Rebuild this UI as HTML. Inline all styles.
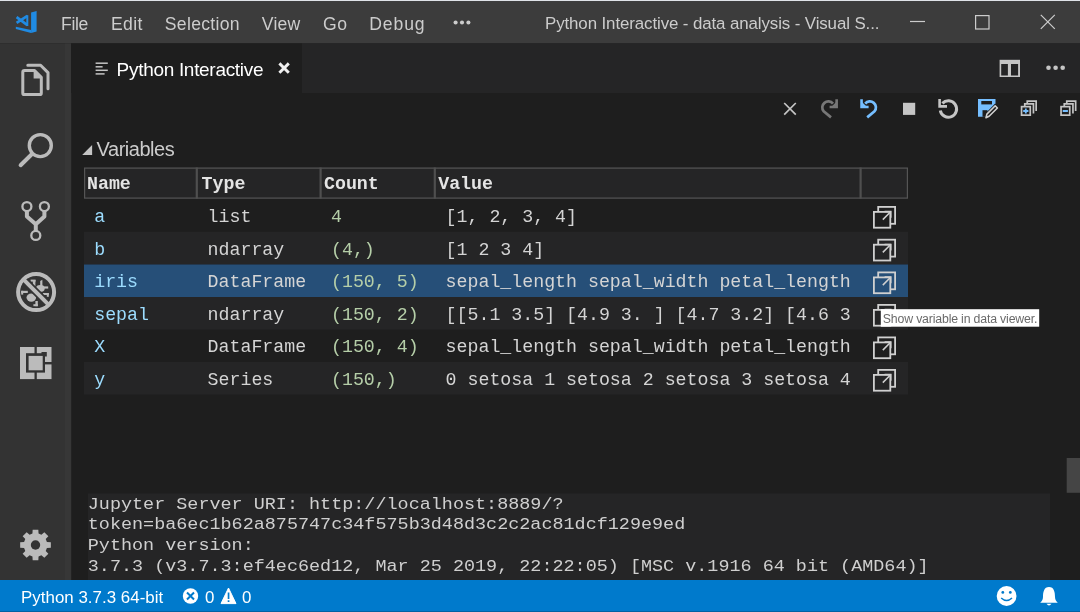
<!DOCTYPE html>
<html><head><meta charset="utf-8">
<style>
html,body{margin:0;padding:0;width:1080px;height:612px;overflow:hidden;background:#1e1e1e;}
svg{display:block;} text{-webkit-font-smoothing:antialiased;}
</style></head>
<body>
<svg style="will-change:transform" width="1080" height="612" viewBox="0 0 1080 612">
<rect x="0" y="0" width="1080" height="612" fill="#1e1e1e"/>
<rect x="0" y="0" width="1080" height="1.2" fill="#dfe3e8"/>
<rect x="0" y="1.2" width="1080" height="42.2" fill="#3c3c3c"/>
<rect x="0" y="43.4" width="65" height="537.6" fill="#333333"/>
<rect x="65" y="43.4" width="6.2" height="536.6" fill="#373737"/>
<rect x="71" y="43.4" width="1009" height="49.6" fill="#252526"/>
<rect x="71" y="43.4" width="231" height="49.6" fill="#1e1e1e"/>
<rect x="0" y="580" width="1080" height="31" fill="#007acc"/>
<rect x="0" y="611" width="1080" height="1" fill="#0062a3"/>
<g fill="#208be3"><polygon points="31.1,12.6 36.6,11 36.6,31.6 31.1,32.9"/><polygon points="15.8,26.7 31.1,29.9 31.1,32.9 15.8,29"/></g>
<path d="M16.6,17.2 L27.4,25.2 M16.6,22.9 L27.4,15.9" stroke="#208be3" stroke-width="2.7" fill="none"/>
<path d="M27.3,15.2 V26" stroke="#208be3" stroke-width="2" fill="none"/>
<circle cx="455.6" cy="22.5" r="2.05" fill="#cccccc"/>
<circle cx="462.0" cy="22.5" r="2.05" fill="#cccccc"/>
<circle cx="468.4" cy="22.5" r="2.05" fill="#cccccc"/>
<line x1="910" y1="21.5" x2="925" y2="21.5" stroke="#cccccc" stroke-width="1.2"/>
<rect x="975.6" y="15.6" width="13.4" height="13.4" fill="none" stroke="#cccccc" stroke-width="1.2"/>
<path d="M1040.8,14.8 L1054.8,28.8 M1054.8,14.8 L1040.8,28.8" stroke="#cccccc" stroke-width="1.2"/>
<path d="M27.8,65.2 H40.6 L48,72.6 V88.8" fill="none" stroke="#bbbbbb" stroke-width="3" stroke-linejoin="round" stroke-linecap="round"/>
<path d="M24.6,70.6 H34.6 L41.3,77.3 V92.9 Q41.3,94.6 39.6,94.6 H24.5 Q22.8,94.6 22.8,92.9 V72.3 Q22.8,70.6 24.6,70.6 Z" fill="none" stroke="#bbbbbb" stroke-width="3" stroke-linejoin="round"/>
<polygon points="33.6,70.6 33.6,78.6 41.5,78.6" fill="#bbbbbb"/>
<circle cx="40.3" cy="145.6" r="11" fill="none" stroke="#bbbbbb" stroke-width="3.4"/>
<line x1="32" y1="154" x2="20.6" y2="165.2" stroke="#bbbbbb" stroke-width="4" stroke-linecap="round"/>
<circle cx="26.9" cy="206.6" r="4.5" fill="none" stroke="#bbbbbb" stroke-width="2.3"/>
<circle cx="44.4" cy="206.6" r="4.5" fill="none" stroke="#bbbbbb" stroke-width="2.3"/>
<circle cx="35.8" cy="235.4" r="4.5" fill="none" stroke="#bbbbbb" stroke-width="2.3"/>
<path d="M26.9,211 V216.5 L35.8,224.2 L44.4,216.5 V211 M35.8,223 V231" fill="none" stroke="#bbbbbb" stroke-width="4" stroke-linejoin="round"/>
<circle cx="36.1" cy="292.1" r="18" fill="none" stroke="#bbbbbb" stroke-width="4"/>
<g fill="#bbbbbb"><ellipse cx="31.3" cy="297.6" rx="4.8" ry="4.2"/><ellipse cx="40.3" cy="288.4" rx="4.4" ry="3.4"/><rect x="32.8" y="280" width="2.6" height="6.5"/><rect x="30.6" y="279.6" width="5" height="2"/><polygon points="40.2,286 40.2,281 42.4,279.8 42.4,286"/><rect x="43.6" y="286.4" width="4.6" height="2.2"/><rect x="21.2" y="290.8" width="6.6" height="2.2"/><rect x="21.2" y="290.8" width="2" height="3.8"/><rect x="35.4" y="301" width="2.4" height="5.2"/><rect x="33.4" y="304.2" width="4.4" height="2"/><rect x="42.8" y="293" width="6" height="2"/><rect x="46.8" y="293" width="2" height="3.8"/></g>
<line x1="25.1" y1="281.1" x2="47.1" y2="303.1" stroke="#333333" stroke-width="7.5"/>
<line x1="23.4" y1="279.4" x2="48.8" y2="304.8" stroke="#bbbbbb" stroke-width="4"/>
<rect x="20" y="347" width="31.5" height="32.1" fill="#bbbbbb"/>
<rect x="26" y="353.2" width="19" height="19.4" fill="#333333"/>
<rect x="41.5" y="352" width="5.3" height="4.5" fill="#333333"/>
<rect x="28.6" y="355.9" width="14.1" height="14.4" fill="#bbbbbb"/>
<rect x="34.5" y="346" width="2.3" height="8" fill="#333333"/>
<rect x="34.5" y="372" width="2.3" height="8" fill="#333333"/>
<rect x="44" y="362" width="8.5" height="2.4" fill="#333333"/>
<polygon points="46.90,541.95 50.84,542.16 50.84,547.84 46.90,548.05 45.72,550.90 48.36,553.84 44.34,557.86 41.40,555.22 38.55,556.40 38.34,560.34 32.66,560.34 32.45,556.40 29.60,555.22 26.66,557.86 22.64,553.84 25.28,550.90 24.10,548.05 20.16,547.84 20.16,542.16 24.10,541.95 25.28,539.10 22.64,536.16 26.66,532.14 29.60,534.78 32.45,533.60 32.66,529.66 38.34,529.66 38.55,533.60 41.40,534.78 44.34,532.14 48.36,536.16 45.72,539.10" fill="#bbbbbb"/>
<circle cx="35.5" cy="545.0" r="4.7" fill="#333333"/>
<line x1="95.6" y1="63.2" x2="107.8" y2="63.2" stroke="#c5c5c5" stroke-width="1.5"/>
<line x1="95.6" y1="66.8" x2="102.6" y2="66.8" stroke="#c5c5c5" stroke-width="1.5"/>
<line x1="95.6" y1="70.3" x2="107.8" y2="70.3" stroke="#c5c5c5" stroke-width="1.5"/>
<line x1="95.6" y1="73.9" x2="104.6" y2="73.9" stroke="#c5c5c5" stroke-width="1.5"/>
<path d="M279.4,63.4 L288.8,72.8 M288.8,63.4 L279.4,72.8" stroke="#f0f0f0" stroke-width="2.9"/>
<rect x="999.6" y="59.8" width="20.4" height="17.2" fill="#c5c5c5"/>
<rect x="1001.2" y="64" width="6.7" height="11.5" fill="#252526"/>
<rect x="1011" y="64" width="7.1" height="11.5" fill="#252526"/>
<circle cx="1048.5" cy="67.7" r="2.3" fill="#c5c5c5"/>
<circle cx="1055.6" cy="67.7" r="2.3" fill="#c5c5c5"/>
<circle cx="1062.7" cy="67.7" r="2.3" fill="#c5c5c5"/>
<path d="M784.2,103 L795.8,114.6 M795.8,103 L784.2,114.6" stroke="#c5c5c5" stroke-width="1.7"/>
<path d="M861.55,99.3 V106.95 H868.6" fill="none" stroke="#75beff" stroke-width="2.6"/><polygon points="861.5,101.5 861.5,107 867,107" fill="#75beff"/><path d="M865.2,103.6 A5.9,5.9 0 1 1 874.5,111.4 L867.2,117.4" fill="none" stroke="#75beff" stroke-width="2.7"/>
<g transform="translate(1698.2,0) scale(-1,1)"><path d="M861.55,99.3 V106.95 H868.6" fill="none" stroke="#777777" stroke-width="2.6"/><polygon points="861.5,101.5 861.5,107 867,107" fill="#777777"/><path d="M865.2,103.6 A5.9,5.9 0 1 1 874.5,111.4 L867.2,117.4" fill="none" stroke="#777777" stroke-width="2.7"/></g>
<rect x="903" y="102.8" width="12.2" height="12.1" fill="#c5c5c5"/>
<path d="M942.4,103.4 A8.2,8.2 0 1 1 940.3,110.4" fill="none" stroke="#c5c5c5" stroke-width="3"/>
<path d="M939.6,99.1 V106.4 H947" fill="none" stroke="#c5c5c5" stroke-width="2.6"/>
<path d="M978,99 H995.5 V106 L987.5,114 L986.6,116.7 H978 Z" fill="#75beff"/>
<rect x="981.3" y="101" width="10.7" height="3.4" fill="#1e1e1e"/>
<rect x="982.5" y="110.2" width="5" height="6.6" fill="#1e1e1e"/>
<path d="M984.2,119.6 L985.4,113.4 L995.2,103.6 L999.6,108 L989.8,117.8 Z" fill="#1e1e1e"/>
<path d="M986,117.7 L986.9,114.1 L995.2,105.8 L997.4,108 L989.1,116.3 Z" fill="none" stroke="#d0d0d0" stroke-width="1.6" stroke-linejoin="round"/>
<path d="M1027.25,103.8 V101.14999999999999 H1036.15 V111.1" fill="none" stroke="#c5c5c5" stroke-width="1.7"/><path d="M1024.75,106.3 V103.95 H1033.45 V113.5" fill="none" stroke="#c5c5c5" stroke-width="1.7"/><rect x="1021.55" y="106.64999999999999" width="8.7" height="8.5" fill="#1e1e1e" stroke="#c5c5c5" stroke-width="1.7"/><path d="M1023.1999999999999,111.0 H1028.3999999999999 M1025.8,108.4 V113.6" stroke="#75beff" stroke-width="1.8"/>
<path d="M1066.75,103.8 V101.14999999999999 H1075.65 V111.1" fill="none" stroke="#c5c5c5" stroke-width="1.7"/><path d="M1064.25,106.3 V103.95 H1072.95 V113.5" fill="none" stroke="#c5c5c5" stroke-width="1.7"/><rect x="1061.0500000000002" y="106.64999999999999" width="8.7" height="8.5" fill="#1e1e1e" stroke="#c5c5c5" stroke-width="1.7"/><path d="M1062.7000000000003,111.0 H1067.9" stroke="#75beff" stroke-width="2"/>
<polygon points="82.2,155 92.1,155 92.1,145.1" fill="#c5c5c5"/>
<rect x="84" y="167.5" width="824" height="31" fill="#252526"/>
<rect x="84.6" y="168.1" width="822.8" height="30" fill="none" stroke="#555555" stroke-width="1.2"/>
<rect x="195.70000000000002" y="167.5" width="2.2" height="31.2" fill="#4f4f4f"/>
<rect x="319.5" y="167.5" width="2.2" height="31.2" fill="#4f4f4f"/>
<rect x="433.7" y="167.5" width="2.2" height="31.2" fill="#4f4f4f"/>
<rect x="859.5" y="167.5" width="2.2" height="31.2" fill="#4f4f4f"/>
<rect x="84" y="231.8" width="824" height="32.69999999999999" fill="#252526"/>
<rect x="84" y="264.5" width="824" height="32.5" fill="#264f78"/>
<rect x="84" y="297" width="824" height="32.5" fill="#252526"/>
<rect x="84" y="362" width="824" height="32.5" fill="#252526"/>
<g transform="translate(0,0)"><rect x="878.2" y="206.9" width="16.9" height="16.9" fill="none" stroke="#d0d0d0" stroke-width="1.8"/><rect x="873.9" y="211.9" width="16.4" height="15.8" fill="#1e1e1e" stroke="#d0d0d0" stroke-width="1.8"/><path d="M882.8,219.6 L890.4,212 M884.6,211.6 H890.8 V217.8" fill="none" stroke="#d0d0d0" stroke-width="1.5"/></g>
<g transform="translate(0,32.80000000000001)"><rect x="878.2" y="206.9" width="16.9" height="16.9" fill="none" stroke="#d0d0d0" stroke-width="1.8"/><rect x="873.9" y="211.9" width="16.4" height="15.8" fill="#252526" stroke="#d0d0d0" stroke-width="1.8"/><path d="M882.8,219.6 L890.4,212 M884.6,211.6 H890.8 V217.8" fill="none" stroke="#d0d0d0" stroke-width="1.5"/></g>
<g transform="translate(0,65.5)"><rect x="878.2" y="206.9" width="16.9" height="16.9" fill="none" stroke="#d0d0d0" stroke-width="1.8"/><rect x="873.9" y="211.9" width="16.4" height="15.8" fill="#264f78" stroke="#d0d0d0" stroke-width="1.8"/><path d="M882.8,219.6 L890.4,212 M884.6,211.6 H890.8 V217.8" fill="none" stroke="#d0d0d0" stroke-width="1.5"/></g>
<g transform="translate(0,98)"><rect x="878.2" y="206.9" width="16.9" height="16.9" fill="none" stroke="#d0d0d0" stroke-width="1.8"/><rect x="873.9" y="211.9" width="16.4" height="15.8" fill="#252526" stroke="#d0d0d0" stroke-width="1.8"/><path d="M882.8,219.6 L890.4,212 M884.6,211.6 H890.8 V217.8" fill="none" stroke="#d0d0d0" stroke-width="1.5"/></g>
<g transform="translate(0,130.5)"><rect x="878.2" y="206.9" width="16.9" height="16.9" fill="none" stroke="#d0d0d0" stroke-width="1.8"/><rect x="873.9" y="211.9" width="16.4" height="15.8" fill="#1e1e1e" stroke="#d0d0d0" stroke-width="1.8"/><path d="M882.8,219.6 L890.4,212 M884.6,211.6 H890.8 V217.8" fill="none" stroke="#d0d0d0" stroke-width="1.5"/></g>
<g transform="translate(0,163)"><rect x="878.2" y="206.9" width="16.9" height="16.9" fill="none" stroke="#d0d0d0" stroke-width="1.8"/><rect x="873.9" y="211.9" width="16.4" height="15.8" fill="#252526" stroke="#d0d0d0" stroke-width="1.8"/><path d="M882.8,219.6 L890.4,212 M884.6,211.6 H890.8 V217.8" fill="none" stroke="#d0d0d0" stroke-width="1.5"/></g>
<rect x="88" y="493.5" width="962" height="86.5" fill="#252526"/>
<rect x="1066.7" y="458" width="13.3" height="34.8" fill="#454545"/>
<rect x="880.8" y="309.2" width="158.4" height="17.5" fill="#ffffff"/>
<circle cx="190.5" cy="596" r="7.7" fill="#ffffff"/>
<path d="M187,592.5 L194,599.5 M194,592.5 L187,599.5" stroke="#007acc" stroke-width="2"/>
<path d="M228.5,588 L236,603.6 H221 Z" fill="#ffffff" stroke="#ffffff" stroke-width="1" stroke-linejoin="round"/>
<rect x="227.7" y="592.5" width="1.7" height="6.5" fill="#007acc"/>
<rect x="227.7" y="600.3" width="1.7" height="1.7" fill="#007acc"/>
<circle cx="1006.6" cy="596" r="9.9" fill="#ffffff"/>
<circle cx="1002.8" cy="592.4" r="1.4" fill="#007acc"/>
<circle cx="1010.3" cy="592.4" r="1.4" fill="#007acc"/>
<path d="M1001.2,598 Q1006.6,603 1012,598" fill="none" stroke="#007acc" stroke-width="1.5"/>
<path d="M1049,587 C1044,587 1043,592 1043,597 C1043,600 1041.5,601.5 1040.2,602.8 H1057.8 C1056.5,601.5 1055,600 1055,597 C1055,592 1054,587 1049,587 Z" fill="#ffffff"/>
<path d="M1046.5,603.8 Q1049,607.2 1051.5,603.8 Z" fill="#ffffff"/>
<text id="mFile" x="61.00" y="29.5" font-family='"Liberation Sans",sans-serif' font-size="17.6" font-weight="normal" fill="#cccccc" textLength="27.36" lengthAdjust="spacing">File</text>
<text id="mEdit" x="111.00" y="29.5" font-family='"Liberation Sans",sans-serif' font-size="17.6" font-weight="normal" fill="#cccccc" textLength="31.43" lengthAdjust="spacing">Edit</text>
<text id="mSel" x="164.80" y="29.5" font-family='"Liberation Sans",sans-serif' font-size="17.6" font-weight="normal" fill="#cccccc" textLength="74.79" lengthAdjust="spacing">Selection</text>
<text id="mView" x="261.80" y="29.5" font-family='"Liberation Sans",sans-serif' font-size="17.6" font-weight="normal" fill="#cccccc" textLength="38.51" lengthAdjust="spacing">View</text>
<text id="mGo" x="323.00" y="29.5" font-family='"Liberation Sans",sans-serif' font-size="17.6" font-weight="normal" fill="#cccccc" textLength="24.08" lengthAdjust="spacing">Go</text>
<text id="mDebug" x="369.20" y="29.5" font-family='"Liberation Sans",sans-serif' font-size="17.6" font-weight="normal" fill="#cccccc" textLength="55.46" lengthAdjust="spacing">Debug</text>
<text id="title" x="545.00" y="28.9" font-family='"Liberation Sans",sans-serif' font-size="16.9" font-weight="normal" fill="#cccccc" textLength="334.45" lengthAdjust="spacing">Python Interactive - data analysis - Visual S...</text>
<text id="tab" x="116.60" y="75.8" font-family='"Liberation Sans",sans-serif' font-size="19.0" font-weight="normal" fill="#ffffff" textLength="146.89" lengthAdjust="spacing">Python Interactive</text>
<text id="vars" x="96.60" y="155.7" font-family='"Liberation Sans",sans-serif' font-size="20.0" font-weight="normal" fill="#cccccc" textLength="78.11" lengthAdjust="spacing">Variables</text>
<text id="stpy" x="21.00" y="602.7" font-family='"Liberation Sans",sans-serif' font-size="16.9" font-weight="normal" fill="#ffffff" textLength="142.20" lengthAdjust="spacing">Python 3.7.3 64-bit</text>
<text id="st0a" x="205.00" y="602.7" font-family='"Liberation Sans",sans-serif' font-size="16.9" font-weight="normal" fill="#ffffff" textLength="8.51" lengthAdjust="spacing">0</text>
<text id="st0b" x="242.00" y="602.7" font-family='"Liberation Sans",sans-serif' font-size="16.9" font-weight="normal" fill="#ffffff" textLength="7.01" lengthAdjust="spacing">0</text>
<text id="tip" x="882.80" y="322.8" font-family='"Liberation Sans",sans-serif' font-size="12.3" font-weight="normal" fill="#6a6a6a" textLength="154.57" lengthAdjust="spacing">Show variable in data viewer.</text>
<text x="87.0" y="189.30" font-family='"Liberation Mono",monospace' font-size="18.25" font-weight="bold" fill="#e4e4e4" xml:space="preserve">Name</text>
<text x="201.6" y="189.30" font-family='"Liberation Mono",monospace' font-size="18.25" font-weight="bold" fill="#e4e4e4" xml:space="preserve">Type</text>
<text x="324.0" y="189.30" font-family='"Liberation Mono",monospace' font-size="18.25" font-weight="bold" fill="#e4e4e4" xml:space="preserve">Count</text>
<text x="438.2" y="189.30" font-family='"Liberation Mono",monospace' font-size="18.25" font-weight="bold" fill="#e4e4e4" xml:space="preserve">Value</text>
<text x="94.2" y="222.20" font-family='"Liberation Mono",monospace' font-size="18.25" font-weight="normal" fill="#9cdcfe" xml:space="preserve">a</text>
<text x="207.6" y="222.20" font-family='"Liberation Mono",monospace' font-size="18.25" font-weight="normal" fill="#d4d4d4" xml:space="preserve">list</text>
<text x="331.0" y="222.20" font-family='"Liberation Mono",monospace' font-size="18.25" font-weight="normal" fill="#b5cea8" xml:space="preserve">4</text>
<text x="445.6" y="222.20" font-family='"Liberation Mono",monospace' font-size="18.25" font-weight="normal" fill="#d4d4d4" xml:space="preserve">[1, 2, 3, 4]</text>
<text x="94.2" y="254.70" font-family='"Liberation Mono",monospace' font-size="18.25" font-weight="normal" fill="#9cdcfe" xml:space="preserve">b</text>
<text x="207.6" y="254.70" font-family='"Liberation Mono",monospace' font-size="18.25" font-weight="normal" fill="#d4d4d4" xml:space="preserve">ndarray</text>
<text x="331.0" y="254.70" font-family='"Liberation Mono",monospace' font-size="18.25" font-weight="normal" fill="#b5cea8" xml:space="preserve">(4,)</text>
<text x="445.6" y="254.70" font-family='"Liberation Mono",monospace' font-size="18.25" font-weight="normal" fill="#d4d4d4" xml:space="preserve">[1 2 3 4]</text>
<text x="94.2" y="287.20" font-family='"Liberation Mono",monospace' font-size="18.25" font-weight="normal" fill="#9cdcfe" xml:space="preserve">iris</text>
<text x="207.6" y="287.20" font-family='"Liberation Mono",monospace' font-size="18.25" font-weight="normal" fill="#d4d4d4" xml:space="preserve">DataFrame</text>
<text x="331.0" y="287.20" font-family='"Liberation Mono",monospace' font-size="18.25" font-weight="normal" fill="#b5cea8" xml:space="preserve">(150, 5)</text>
<text x="445.6" y="287.20" font-family='"Liberation Mono",monospace' font-size="18.25" font-weight="normal" fill="#d4d4d4" xml:space="preserve">sepal_length sepal_width petal_length</text>
<text x="94.2" y="319.70" font-family='"Liberation Mono",monospace' font-size="18.25" font-weight="normal" fill="#9cdcfe" xml:space="preserve">sepal</text>
<text x="207.6" y="319.70" font-family='"Liberation Mono",monospace' font-size="18.25" font-weight="normal" fill="#d4d4d4" xml:space="preserve">ndarray</text>
<text x="331.0" y="319.70" font-family='"Liberation Mono",monospace' font-size="18.25" font-weight="normal" fill="#b5cea8" xml:space="preserve">(150, 2)</text>
<text x="445.6" y="319.70" font-family='"Liberation Mono",monospace' font-size="18.25" font-weight="normal" fill="#d4d4d4" xml:space="preserve">[[5.1 3.5] [4.9 3. ] [4.7 3.2] [4.6 3</text>
<text x="94.2" y="352.20" font-family='"Liberation Mono",monospace' font-size="18.25" font-weight="normal" fill="#9cdcfe" xml:space="preserve">X</text>
<text x="207.6" y="352.20" font-family='"Liberation Mono",monospace' font-size="18.25" font-weight="normal" fill="#d4d4d4" xml:space="preserve">DataFrame</text>
<text x="331.0" y="352.20" font-family='"Liberation Mono",monospace' font-size="18.25" font-weight="normal" fill="#b5cea8" xml:space="preserve">(150, 4)</text>
<text x="445.6" y="352.20" font-family='"Liberation Mono",monospace' font-size="18.25" font-weight="normal" fill="#d4d4d4" xml:space="preserve">sepal_length sepal_width petal_length</text>
<text x="94.2" y="384.70" font-family='"Liberation Mono",monospace' font-size="18.25" font-weight="normal" fill="#9cdcfe" xml:space="preserve">y</text>
<text x="207.6" y="384.70" font-family='"Liberation Mono",monospace' font-size="18.25" font-weight="normal" fill="#d4d4d4" xml:space="preserve">Series</text>
<text x="331.0" y="384.70" font-family='"Liberation Mono",monospace' font-size="18.25" font-weight="normal" fill="#b5cea8" xml:space="preserve">(150,)</text>
<text x="445.6" y="384.70" font-family='"Liberation Mono",monospace' font-size="18.25" font-weight="normal" fill="#d4d4d4" xml:space="preserve">0 setosa 1 setosa 2 setosa 3 setosa 4</text>
<g transform="translate(0,508.70) scale(1,0.85) translate(0,-508.70)"><text x="87.8" y="508.70" font-family='"Liberation Mono",monospace' font-size="18.45" font-weight="normal" fill="#cfcfcf" xml:space="preserve">Jupyter Server URI: http://localhost:8889/?</text></g>
<g transform="translate(0,529.40) scale(1,0.85) translate(0,-529.40)"><text x="87.8" y="529.40" font-family='"Liberation Mono",monospace' font-size="18.45" font-weight="normal" fill="#cfcfcf" xml:space="preserve">token=ba6ec1b62a875747c34f575b3d48d3c2c2ac81dcf129e9ed</text></g>
<g transform="translate(0,550.10) scale(1,0.85) translate(0,-550.10)"><text x="87.8" y="550.10" font-family='"Liberation Mono",monospace' font-size="18.45" font-weight="normal" fill="#cfcfcf" xml:space="preserve">Python version:</text></g>
<g transform="translate(0,570.80) scale(1,0.85) translate(0,-570.80)"><text x="87.8" y="570.80" font-family='"Liberation Mono",monospace' font-size="18.45" font-weight="normal" fill="#cfcfcf" xml:space="preserve">3.7.3 (v3.7.3:ef4ec6ed12, Mar 25 2019, 22:22:05) [MSC v.1916 64 bit (AMD64)]</text></g>
</svg>
</body></html>
